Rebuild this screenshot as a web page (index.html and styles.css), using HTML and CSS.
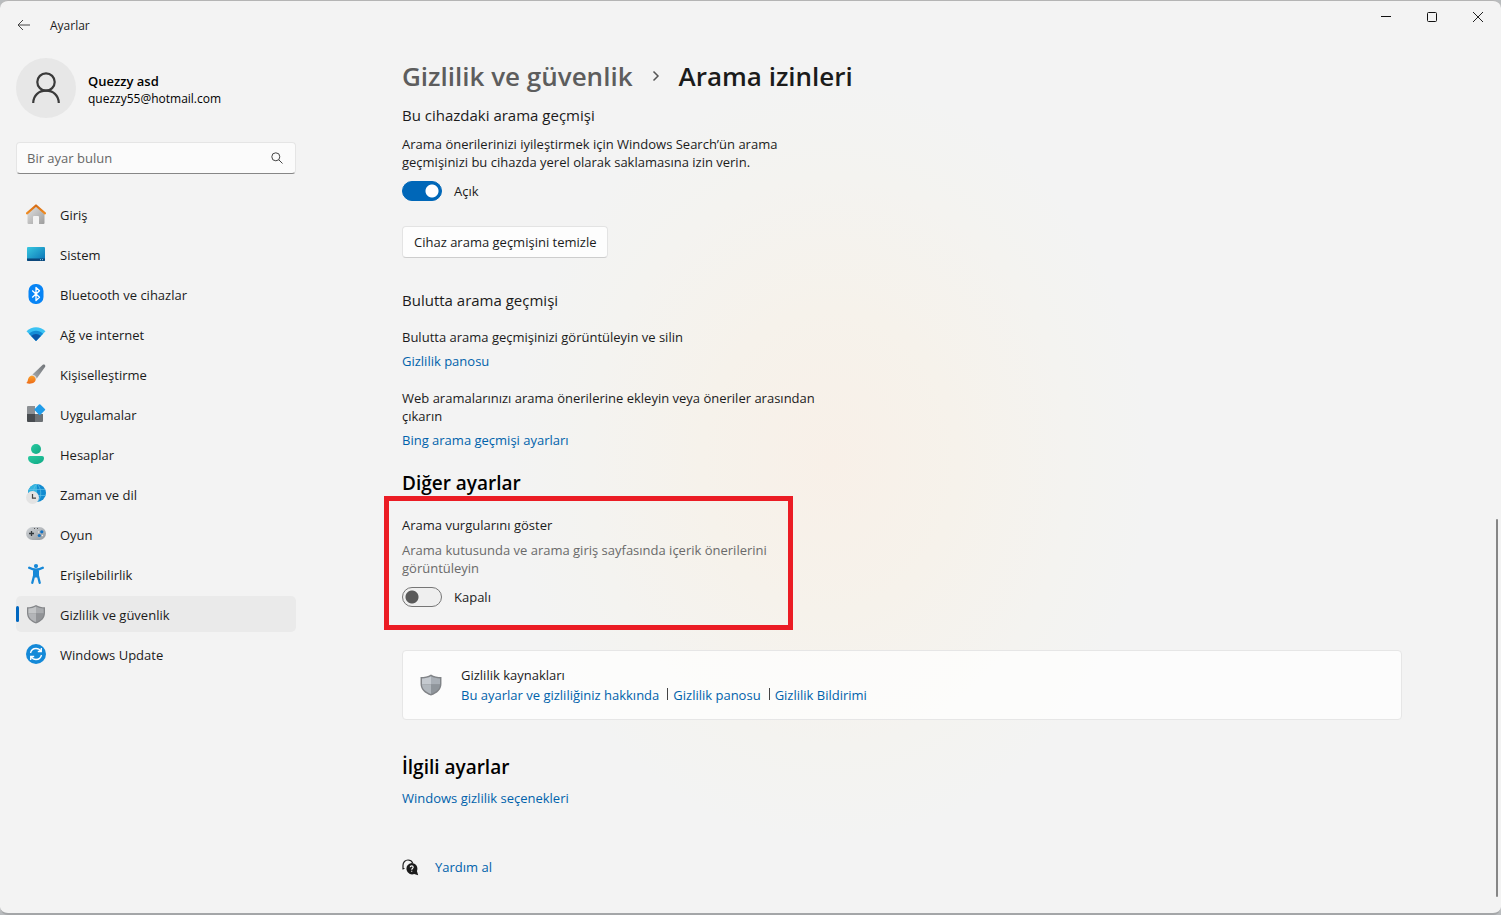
FILE: index.html
```html
<!DOCTYPE html>
<html lang="tr">
<head>
    <meta charset="UTF-8">
    <meta name="viewport" content="width=device-width, initial-scale=1.0">
    <title>Ayarlar</title>
    <link rel="stylesheet" href="styles.css">
</head>
<body>
<div class="window">
    <header class="titlebar">
        <button class="back" type="button" aria-label="Geri">
            <svg width="14" height="12" viewBox="0 0 14 12"><path d="M13 6H1M6 1L1 6l5 5" fill="none" stroke="#444"/></svg>
        </button>
        <span class="app-name">Ayarlar</span>
        <div class="window-buttons">
            <button type="button" aria-label="Simge durumuna küçült">
                <svg width="12" height="12" viewBox="0 0 12 12"><path d="M1 5.5h10" stroke="#111"/></svg>
            </button>
            <button type="button" aria-label="Ekranı kapla">
                <svg width="12" height="12" viewBox="0 0 12 12"><rect x="1.5" y="1.5" width="9" height="9" rx="1" fill="none" stroke="#111"/></svg>
            </button>
            <button type="button" aria-label="Kapat">
                <svg width="12" height="12" viewBox="0 0 12 12"><path d="M1 1l10 10M11 1L1 11" stroke="#222"/></svg>
            </button>
        </div>
    </header>

    <div class="layout">
        <aside class="sidebar">
            <div class="profile">
                <div class="avatar">
                    <svg width="28" height="32" viewBox="0 0 28 32" fill="none" stroke="#3a3a3a" stroke-width="2.2"><circle cx="14" cy="10" r="8.7"/><path d="M1.2 31C1.500 23 7 18.700 14 18.700S26.500 23 26.800 31"/></svg>
                </div>
                <div class="user">
                    <div class="user-name">Quezzy asd</div>
                    <div class="user-mail">quezzy55@hotmail.com</div>
                </div>
            </div>

            <form class="search">
                <input type="text" placeholder="Bir ayar bulun" aria-label="Bir ayar bulun">
                <button type="button" aria-label="Ara">
                    <svg width="12" height="12" viewBox="0 0 12 12" fill="none" stroke="#444"><circle cx="4.8" cy="4.8" r="4"/><path d="M7.700 7.700l3.800 3.800"/></svg>
                </button>
            </form>

            <nav class="menu">
                <a href="#">
                    <svg width="20" height="20" viewBox="0 0 20 20">
                        <defs><linearGradient id="wall" x1="0" y1="0" x2="1" y2="1"><stop offset="0" stop-color="#e4e4e4"/><stop offset="1" stop-color="#9c9c9c"/></linearGradient><linearGradient id="roof" x1="0" y1="0" x2="0" y2="1"><stop offset="0" stop-color="#d66b12"/><stop offset="1" stop-color="#f08c22"/></linearGradient></defs>
                        <path d="M1.500 9L10 1.500 18.500 9v10a1 1 0 0 1-1 1H13v-7a1 1 0 0 0-1-1H8a1 1 0 0 0-1 1v7H2.500a1 1 0 0 1-1-1z" fill="url(#wall)"/>
                        <path d="M1 9.300L10 1.500l9 7.800" fill="none" stroke="url(#roof)" stroke-width="2.2" stroke-linecap="round" stroke-linejoin="round"/>
                    </svg>
                    <span>Giriş</span>
                </a>
                <a href="#">
                    <svg width="20" height="20" viewBox="0 0 20 20">
                        <defs><linearGradient id="screen" x1="0" y1="0" x2="1" y2="1"><stop offset="0" stop-color="#38c8e0"/><stop offset="1" stop-color="#0870b4"/></linearGradient></defs>
                        <rect x="1" y="3" width="18" height="14" rx="1" fill="url(#screen)"/>
                        <path d="M1 14.500h18V16a1 1 0 0 1-1 1H2a1 1 0 0 1-1-1z" fill="#0c477b"/>
                        <path d="M14 15.700h1M16 15.700h1" stroke="#8dd8f4"/>
                    </svg>
                    <span>Sistem</span>
                </a>
                <a href="#">
                    <svg width="20" height="20" viewBox="0 0 20 20">
                        <rect x="2.5" y="0" width="15" height="20" rx="7" fill="#0784f5"/>
                        <path d="M6.200 6.500l7.300 6.800L10 16.500v-13l3.500 3.200-7.300 6.800" fill="none" stroke="#fff" stroke-width="1.3" stroke-linejoin="round"/>
                    </svg>
                    <span>Bluetooth ve cihazlar</span>
                </a>
                <a href="#">
                    <svg width="20" height="20" viewBox="0 0 20 20">
                        <path d="M0.500 7.300C6 1.800 14 1.800 19.500 7.300L10 17z" fill="#3ac2f3"/>
                        <path d="M2.900 9.700c4-4 10.200-4 14.200 0L10 17z" fill="#138cd6"/>
                        <path d="M5.200 12.100c2.700-2.700 6.900-2.700 9.600 0L10 17z" fill="#0a56a8"/>
                    </svg>
                    <span>Ağ ve internet</span>
                </a>
                <a href="#">
                    <svg width="20" height="20" viewBox="0 0 20 20">
                        <defs><linearGradient id="handle" x1="1" y1="0" x2="0" y2="1"><stop offset="0" stop-color="#707478"/><stop offset="1" stop-color="#a5a9ac"/></linearGradient><linearGradient id="bristle" x1="0" y1="0" x2="0" y2="1"><stop offset="0" stop-color="#fba02c"/><stop offset="1" stop-color="#ec6a17"/></linearGradient></defs>
                        <path d="M6.500 10.500L16.500 1c1.600-1.400 3.600.3 2.500 2L10.800 14.500z" fill="url(#handle)"/>
                        <path d="M6.500 10.500c2 .3 3.800 2 4.300 4L9.200 16.500 5 12z" fill="#dcdcdc"/>
                        <path d="M0.300 19c1.700-1 1.200-3.500 2.500-5.500 1.400-2.200 4.200-2.200 5.800-.6 1.500 1.600 1.400 4-.4 5.400C6 20 2.700 20.200.3 19z" fill="url(#bristle)"/>
                    </svg>
                    <span>Kişiselleştirme</span>
                </a>
                <a href="#">
                    <svg width="20" height="20" viewBox="0 0 20 20">
                        <path d="M2 2h7v8H1V3a1 1 0 0 1 1-1z" fill="#8b8f93"/>
                        <path d="M1 10h8v8H2a1 1 0 0 1-1-1z" fill="#484c50"/>
                        <path d="M9 10h8v7a1 1 0 0 1-1 1H9z" fill="#6c7175"/>
                        <path d="M13 .5L8.700 4.900a1 1 0 0 0 0 1.400L13 10.800a1 1 0 0 0 1.400 0l4.500-4.500a1 1 0 0 0 0-1.400L14.400.5a1 1 0 0 0-1.400 0z" fill="#209ce9"/>
                    </svg>
                    <span>Uygulamalar</span>
                </a>
                <a href="#">
                    <svg width="20" height="20" viewBox="0 0 20 20">
                        <defs><linearGradient id="person" x1="0" y1="0" x2="1" y2="1"><stop offset="0" stop-color="#28caa0"/><stop offset="1" stop-color="#10a985"/></linearGradient></defs>
                        <circle cx="10" cy="5" r="5" fill="url(#person)"/>
                        <path d="M4 12h12a2 2 0 0 1 2 2c0 3.500-3.500 6-8 6s-8-2.500-8-6a2 2 0 0 1 2-2z" fill="url(#person)"/>
                    </svg>
                    <span>Hesaplar</span>
                </a>
                <a href="#">
                    <svg width="20" height="20" viewBox="0 0 20 20">
                        <circle cx="11" cy="9" r="9" fill="#128bd0"/>
                        <path d="M11 0a9 9 0 0 0-9 8l9 1z" fill="#35b4de"/>
                        <path d="M3 5.500h16M2.500 11.500h17M11 0c-5 4-5 14 0 18M11 0c5 4 5 14 0 18" fill="none" stroke="#62c2e8" stroke-width=".7"/>
                        <circle cx="6.5" cy="13.5" r="6.5" fill="#e3e3e3"/>
                        <path d="M6.500 10v4.200H10" fill="none" stroke="#444" stroke-width="1.2"/>
                    </svg>
                    <span>Zaman ve dil</span>
                </a>
                <a href="#">
                    <svg width="20" height="20" viewBox="0 0 20 20">
                        <defs><linearGradient id="pad" x1="0" y1="0" x2="1" y2="1"><stop offset="0" stop-color="#d2d5d8"/><stop offset="1" stop-color="#92989e"/></linearGradient></defs>
                        <rect x="0" y="3" width="20" height="13" rx="6.5" fill="url(#pad)"/>
                        <path d="M5.500 7v5M3 9.500h5" stroke="#33383d" stroke-width="1.3"/>
                        <path d="M8 4.500h1M11 4.500h1" stroke="#555"/>
                        <circle cx="15.8" cy="7.8" r="1.6" fill="#1172c4"/><circle cx="13.3" cy="11.5" r="1.6" fill="#1172c4"/>
                        <circle cx="12.6" cy="8" r=".7" fill="#eee"/><circle cx="16.4" cy="11.5" r=".7" fill="#eee"/>
                    </svg>
                    <span>Oyun</span>
                </a>
                <a href="#">
                    <svg width="20" height="20" viewBox="0 0 20 20" fill="none" stroke="#1688d8" stroke-linecap="round" stroke-linejoin="round">
                        <circle cx="10" cy="2.1" r="2.1" fill="#1688d8" stroke="none"/>
                        <path d="M3.200 3.800C7.500 6.300 12.500 6.300 16.800 3.800M8 12L6.300 18.800M12 12l1.700 6.800" stroke-width="2.3"/>
                        <path d="M8 7h4v5.500H8z" fill="#1688d8" stroke-width="2"/>
                    </svg>
                    <span>Erişilebilirlik</span>
                </a>
                <a href="#" class="active">
                    <svg width="20" height="20" viewBox="0 0 20 20">
                        <path d="M10 1c2.700 1.800 5.700 2.300 9 2.300V9c0 5-3.500 8.500-9 10.500C4.500 17.500 1 14 1 9V3.300C4.300 3.300 7.300 2.800 10 1z" fill="#85878a"/>
                        <path d="M10 2.500c-2.300 1.300-4.700 1.900-7.700 2V9.500H10z" fill="#c3c5c7"/>
                        <path d="M10 2.500c2.300 1.300 4.700 1.900 7.700 2V9.500H10z" fill="#a9abae"/>
                        <path d="M2.300 9.500H10v8.600c-4.500-1.800-7.500-4.400-7.700-8.600z" fill="#b3b5b8"/>
                        <path d="M17.700 9.500H10v8.600c4.500-1.800 7.500-4.400 7.700-8.600z" fill="#929497"/>
                    </svg>
                    <span>Gizlilik ve güvenlik</span>
                </a>
                <a href="#">
                    <svg width="20" height="20" viewBox="0 0 20 20">
                        <circle cx="10" cy="10" r="10" fill="#1489d8"/>
                        <path d="M4.500 9C5.200 6 7.400 4.500 10 4.500c2 0 3.800 1 4.900 2.700M15.500 11c-.7 3-2.900 4.500-5.500 4.500-2 0-3.800-1-4.900-2.700M15.300 4v3.500h-3.500M4.700 16v-3.500h3.500" fill="none" stroke="#fff" stroke-width="1.3"/>
                    </svg>
                    <span>Windows Update</span>
                </a>
            </nav>
        </aside>

        <main class="content">
            <h1 class="breadcrumb">
                <a href="#">Gizlilik ve güvenlik</a>
                <svg width="8" height="12" viewBox="0 0 8 12"><path d="M1.500 1.500L6 6l-4.500 4.500" fill="none" stroke="#555" stroke-width="1.5"/></svg>
                <span>Arama izinleri</span>
            </h1>

            <section class="device-history">
                <h3>Bu cihazdaki arama geçmişi</h3>
                <p>Arama önerilerinizi iyileştirmek için Windows Search’ün arama geçmişinizi bu cihazda yerel olarak saklamasına izin verin.</p>
                <label class="switch"><input type="checkbox" checked> Açık</label>
                <button class="clear" type="button">Cihaz arama geçmişini temizle</button>
            </section>

            <section class="cloud-history">
                <h3>Bulutta arama geçmişi</h3>
                <p>Bulutta arama geçmişinizi görüntüleyin ve silin</p>
                <a href="#">Gizlilik panosu</a>
                <p>Web aramalarınızı arama önerilerine ekleyin veya öneriler arasından çıkarın</p>
                <a href="#">Bing arama geçmişi ayarları</a>
            </section>

            <h2>Diğer ayarlar</h2>
            <section class="highlight">
                <h4>Arama vurgularını göster</h4>
                <p>Arama kutusunda ve arama giriş sayfasında içerik önerilerini görüntüleyin</p>
                <label class="switch"><input type="checkbox"> Kapalı</label>
            </section>

            <section class="card">
                <svg width="22" height="22" viewBox="0 0 20 20">
                    <path d="M10 0.500c2.700 1.800 5.900 2.300 9.500 2.300V9c0 5-3.800 8.500-9.500 10.500C4.300 17.500.5 14 .5 9V2.800C4.100 2.800 7.300 2.300 10 .5z" fill="#808387"/>
                    <path d="M10 2c-2.300 1.300-5 1.900-8.200 2V9.500H10z" fill="#c5cad0"/>
                    <path d="M10 2c2.300 1.300 5 1.900 8.200 2V9.500H10z" fill="#a9afb6"/>
                    <path d="M1.800 9.500H10v8.600c-4.700-1.800-8-4.400-8.200-8.600z" fill="#b2b8be"/>
                    <path d="M18.200 9.500H10v8.600c4.700-1.800 8-4.400 8.200-8.600z" fill="#8f959b"/>
                </svg>
                <div>
                    <h4>Gizlilik kaynakları</h4>
                    <div class="card-links">
                        <a href="#">Bu ayarlar ve gizliliğiniz hakkında</a>
                        <a href="#">Gizlilik panosu</a>
                        <a href="#">Gizlilik Bildirimi</a>
                    </div>
                </div>
            </section>

            <h2>İlgili ayarlar</h2>
            <a class="related" href="#">Windows gizlilik seçenekleri</a>

            <div class="help">
                <svg width="17" height="17" viewBox="0 0 17 17">
                    <path d="M1 10.500V6.300C1 3.300 3.200 1 6 1c2.300 0 4 1.200 4.700 3M1 9.500h1.500" fill="none" stroke="#222" stroke-width="1.2"/>
                    <path d="M9.700 4a5.700 5.700 0 0 1 5.200 8l1.300 4.200-4-1.200a5.700 5.700 0 1 1-2.500-11z" fill="#1b1b1b"/>
                    <path d="M8.200 8.300c0-1.900 3-1.900 3 0 0 1.200-1.500 1.200-1.500 2.400M9.700 11.700v1.100" fill="none" stroke="#fff" stroke-width="1.1"/>
                </svg>
                <a href="#">Yardım al</a>
            </div>
        </main>
    </div>
    <div class="scroll-thumb"></div>
</div>
</body>
</html>
```
FILE: styles.css
```css
* {
    box-sizing: border-box;
}
body {
    margin: 0;
    background-color: #b9bcbe;
    color: #1b1b1b;
    font-family: "Open Sans", "Noto Sans", sans-serif;
    font-size: 13px;
    line-height: 18px;
}
h1, h2, h3, h4, p {
    margin: 0;
    font-weight: normal;
}
a {
    color: #0062ab;
    text-decoration: none;
}
button, input {
    font: inherit;
    color: inherit;
}
svg {
    display: block;
    flex: none;
}
.window {
    position: relative;
    min-height: 100vh;
    border-top: 1px solid #b4b4b4;
    border-bottom: 2px solid #a4a6a8;
    border-radius: 8px;
    background: radial-gradient(ellipse 320px 380px at 830px 460px, #f8f0e8 0%, #f6f2eb 40%, #f4f3f0 75%, #f3f3f3 100%) #f3f3f3;
}

/* title bar */
.titlebar {
    display: flex;
    height: 48px;
}
.back {
    width: 50px;
    padding: 0 0 0 17px;
    border: none;
    background: none;
}
.app-name {
    font-size: 12px;
    line-height: 50px;
}
.window-buttons {
    display: flex;
    margin-left: auto;
}
.window-buttons button {
    display: flex;
    align-items: center;
    justify-content: center;
    width: 46px;
    height: 32px;
    padding: 0;
    border: none;
    background: none;
}
.layout {
    display: flex;
}

/* sidebar */
.sidebar {
    flex: none;
    width: 296px;
    padding: 9px 0 0 16px;
}
.profile {
    display: flex;
    align-items: center;
    gap: 12px;
    color: #000;
}
.avatar {
    display: flex;
    align-items: center;
    justify-content: center;
    width: 60px;
    height: 60px;
    border-radius: 50%;
    background-color: #e7e7e7;
}
.user {
    padding-top: 4px;
}
.user-name {
    font-weight: 600;
}
.user-mail {
    font-size: 12px;
}
.search {
    display: flex;
    height: 32px;
    margin-top: 24px;
    border: 1px solid #e5e5e5;
    border-bottom-color: #868686;
    border-radius: 4px;
    background-color: #fbfbfb;
}
.search input {
    flex: 1;
    min-width: 0;
    padding: 0 10px;
    border: none;
    background: none;
    outline: none;
}
.search input::placeholder {
    color: #666;
}
.search button {
    padding: 0 12px;
    border: none;
    background: none;
}
.menu {
    display: flex;
    flex-direction: column;
    gap: 4px;
    margin-top: 22px;
}
.menu a {
    display: flex;
    align-items: center;
    gap: 14px;
    height: 36px;
    padding-left: 10px;
    border-radius: 5px;
    color: #1b1b1b;
}
.menu span {
    padding-top: 2px;
}
.menu .active {
    position: relative;
    background-color: #eaeaea;
}
.menu .active::before {
    content: "";
    position: absolute;
    left: 0;
    top: 10px;
    width: 3px;
    height: 16px;
    border-radius: 2px;
    background-color: #0067c0;
}

/* content */
.content {
    flex: 1;
    padding: 9px 99px 36px 106px;
}
.breadcrumb {
    display: flex;
    align-items: center;
    gap: 19px;
    font-size: 26px;
    font-weight: 600;
    line-height: 36px;
}
.breadcrumb a {
    color: #5d5d5d;
}
h2 {
    font-size: 19px;
    font-weight: 600;
    line-height: 26px;
    color: #000;
}
h3 {
    font-size: 15px;
    line-height: 20px;
}
.device-history, .cloud-history {
    display: flex;
    flex-direction: column;
    align-items: flex-start;
    max-width: 420px;
}
.device-history {
    margin-top: 11px;
}
.device-history p {
    max-width: 400px;
    margin: 10px 0;
}
.switch {
    display: flex;
    align-items: center;
    gap: 12px;
    height: 20px;
}
.switch input {
    appearance: none;
    width: 40px;
    height: 20px;
    margin: 0;
    border: 1px solid #767676;
    border-radius: 10px;
    background: radial-gradient(circle at 9px 9px, #5a5a5a 6px, transparent 7px) #efefef;
}
.switch input:checked {
    border-color: #0067b8;
    background: radial-gradient(circle at 29px 9px, #fff 6px, transparent 7px) #0067b8;
}
.clear {
    height: 32px;
    margin-top: 25px;
    padding: 0 11px;
    border: 1px solid #e3e3e3;
    border-bottom-color: #cdcdcd;
    border-radius: 4px;
    background-color: #fdfdfd;
}
.cloud-history {
    margin: 32px 0 21px;
}
.cloud-history p {
    margin: 18px 0 6px;
}
.cloud-history a + p {
    margin-top: 19px;
}
.highlight {
    width: 409px;
    margin-left: -18px;
    padding: 15px 13px 18px;
    border: 5px solid #eb1c24;
}
.highlight p {
    margin: 7px 0 10px;
    color: #6a6a6a;
}
.card {
    display: flex;
    align-items: center;
    gap: 19px;
    margin: 20px 0 34px;
    padding: 15px 17px;
    border: 1px solid #e6e6e6;
    border-radius: 4px;
    background-color: rgba(255, 255, 255, 0.7);
}
.card-links {
    display: flex;
    margin-top: 2px;
}
.card-links a + a {
    margin-left: 8px;
    padding-left: 6px;
    background: linear-gradient(#444, #444) 0 2px / 1px 12px no-repeat;
}
.related {
    display: block;
    margin-top: 9px;
}
.help {
    display: flex;
    align-items: center;
    gap: 16px;
    margin-top: 51px;
}
.scroll-thumb {
    position: absolute;
    right: 3px;
    top: 518px;
    bottom: 16px;
    width: 2px;
    border-radius: 1px;
    background-color: #868686;
}
```
